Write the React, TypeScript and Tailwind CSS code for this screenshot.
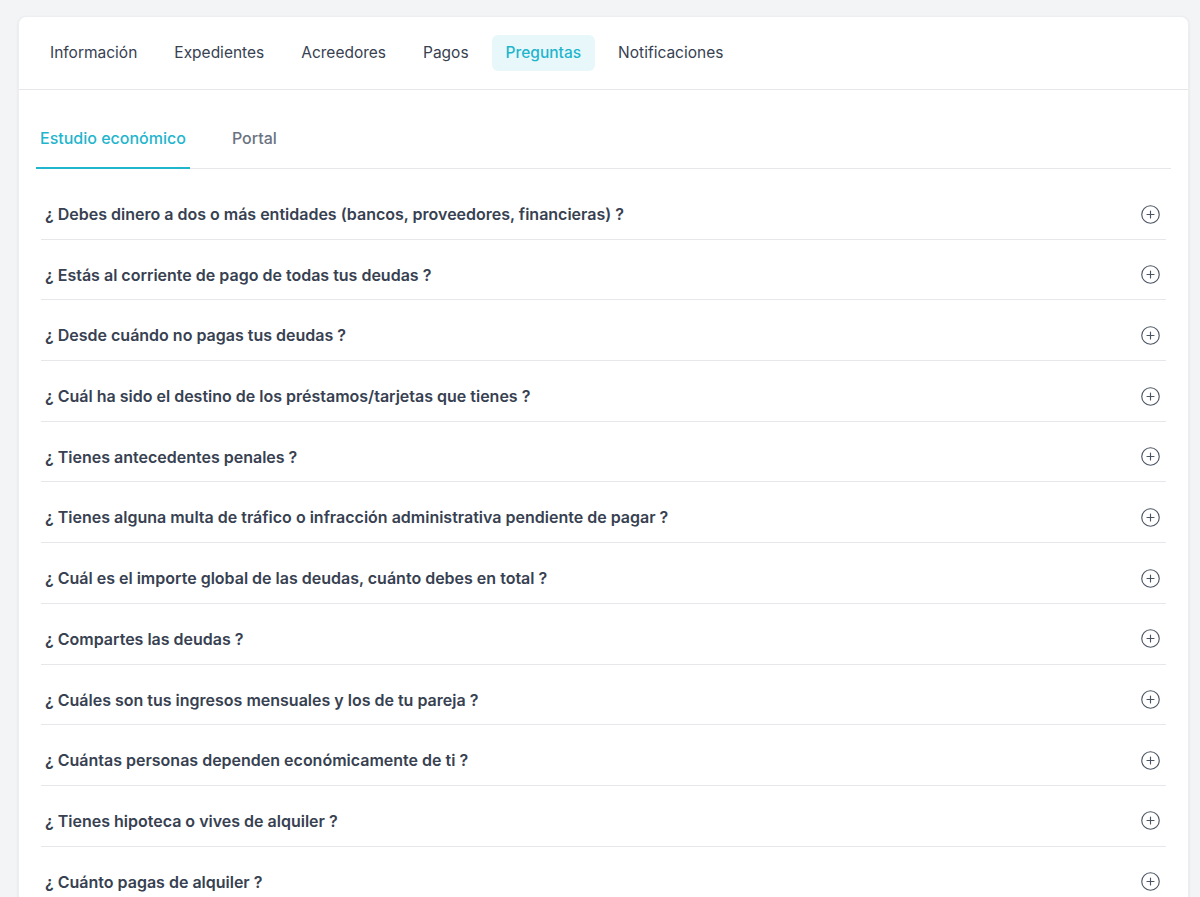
import { CirclePlus } from "lucide-react";
import { useState } from "react";

const mainTabs = ["Información", "Expedientes", "Acreedores", "Pagos", "Preguntas", "Notificaciones"];

const subTabs = ["Estudio económico", "Portal"];

const questions = [
  "¿ Debes dinero a dos o más entidades (bancos, proveedores, financieras) ?",
  "¿ Estás al corriente de pago de todas tus deudas ?",
  "¿ Desde cuándo no pagas tus deudas ?",
  "¿ Cuál ha sido el destino de los préstamos/tarjetas que tienes ?",
  "¿ Tienes antecedentes penales ?",
  "¿ Tienes alguna multa de tráfico o infracción administrativa pendiente de pagar ?",
  "¿ Cuál es el importe global de las deudas, cuánto debes en total ?",
  "¿ Compartes las deudas ?",
  "¿ Cuáles son tus ingresos mensuales y los de tu pareja ?",
  "¿ Cuántas personas dependen económicamente de ti ?",
  "¿ Tienes hipoteca o vives de alquiler ?",
  "¿ Cuánto pagas de alquiler ?",
];

export default function App() {
  const [tab, setTab] = useState("Preguntas");
  const [subTab, setSubTab] = useState("Estudio económico");

  return (
    <div className="min-h-screen bg-[#f3f4f6] pt-4 pl-[18px] pr-3 font-['Inter','Noto_Sans',sans-serif]">
      <div className="w-[1171px] rounded-t-lg bg-white shadow-[0_1px_3px_rgba(0,0,0,0.08)] border border-[#eceef1]">
        <nav className="flex gap-[9px] border-b border-[#e5e7eb] px-[17px] py-[18px]">
          {mainTabs.map((t) => (
            <button
              key={t}
              onClick={() => setTab(t)}
              className={
                "h-9 rounded-md px-[14px] text-[15.5px] " +
                (t === tab ? "bg-[#e8f8fa] font-medium text-[#1fb5cd]" : "text-[#374151]")
              }
            >
              {t}
            </button>
          ))}
        </nav>

        <div className="px-[17px] pt-9">
          <div className="flex gap-[38px] border-b border-[#e5e7eb]">
            {subTabs.map((t) => (
              <button
                key={t}
                onClick={() => setSubTab(t)}
                className={
                  "-mb-px border-b-2 px-1 pb-[17px] text-base font-medium leading-6 " +
                  (t === subTab ? "border-[#1fb5cd] text-[#1fb5cd]" : "border-transparent text-[#6b7280]")
                }
              >
                {t}
              </button>
            ))}
          </div>

          <div className="mt-[10px] px-[5px]">
            {questions.map((q) => (
              <div
                key={q}
                className="flex items-center justify-between border-b border-[#e5e7eb] pt-[23px] pb-[12.7px] pl-1 pr-[5px]"
              >
                <span className="text-base font-semibold leading-6 text-[#374151]">{q}</span>
                <CirclePlus size={21} strokeWidth={1.3} className="text-[#4b5563]" />
              </div>
            ))}
          </div>
        </div>
      </div>
    </div>
  );
}
